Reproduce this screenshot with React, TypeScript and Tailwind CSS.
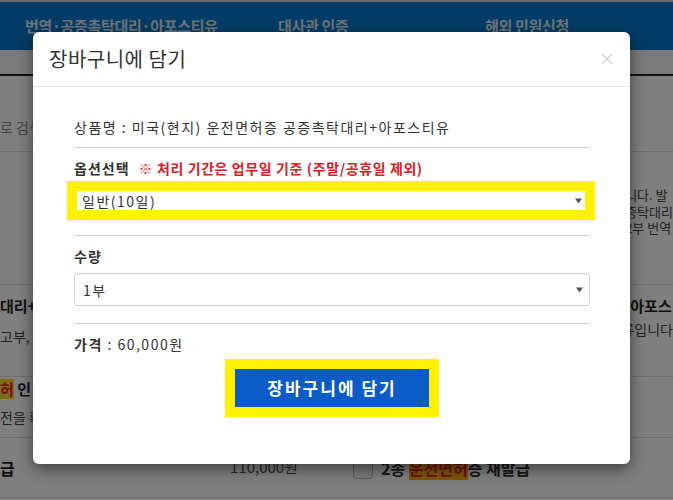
const font =
  "font-['Malgun_Gothic','Noto_Sans_CJK_KR','Liberation_Sans',sans-serif]";

function Caret() {
  return (
    <svg width="7" height="6" viewBox="0 0 7 6" className="shrink-0">
      <path d="M0 0.5H7L3.5 5.5Z" fill="#555" />
    </svg>
  );
}

function BackgroundPage() {
  return (
    <div className="flex flex-col">
      <div className="flex h-[50px] items-center border-t-2 border-[#c9d5df] bg-[#0678cc] text-[15px] font-bold tracking-[-0.3px] text-[#dde8f2]">
        <span className="w-[278px] pl-[25px]">번역·공증촉탁대리·아포스티유</span>
        <span className="w-[207px]">대사관 인증</span>
        <span>해외 민원신청</span>
      </div>
      <div className="h-[26px] border-b-2 border-[#222] bg-[#f6f6f6]" />

      {/* search row */}
      <div className="flex h-[76px] border-b border-[#ddd] pt-[41px] text-[14px] leading-[20px] text-[#888]">
        <span className="w-[33px] overflow-hidden whitespace-nowrap">로 검색</span>
      </div>

      {/* row B */}
      <div className="flex h-[133px] border-b border-[#ddd]">
        <div className="w-[629px]" />
        <div className="flex flex-col whitespace-nowrap pt-[35px] text-[13px] leading-[16px] text-[#444]">
          <span>니다. 발</span>
          <span className="mt-[1px]">증탁대리</span>
          <span>2부 번역</span>
        </div>
      </div>

      {/* row C */}
      <div className="flex h-[92px] border-b border-[#ddd] whitespace-nowrap text-[14px]">
        <div className="flex w-[629px] flex-col pt-[11px] leading-[20px]">
          <span className="w-[33px] overflow-hidden text-[15px] font-bold text-[#222]">대리+</span>
          <span className="mt-[10px] w-[33px] overflow-hidden text-[#444]">고부, 번</span>
        </div>
        <div className="flex flex-col pt-[11px] leading-[20px]">
          <span className="text-[15px] font-bold text-[#222]">+아포스</span>
          <span className="mt-[3px] text-[#444]">류입니다</span>
        </div>
      </div>

      {/* row D */}
      <div className="flex h-[61px] flex-col border-b border-[#ddd] whitespace-nowrap pt-[2px] text-[14px] leading-[20px]">
        <span className="w-[33px] overflow-hidden text-[15px] font-bold text-[#222]">
          <span className="bg-[#ffd42a] text-[#e01e1e]">허</span> 인
        </span>
        <span className="mt-[8px] w-[33px] overflow-hidden text-[#444]">전을 확</span>
      </div>

      {/* row E */}
      <div className="flex h-[60px] items-center border-b border-[#ddd] whitespace-nowrap">
        <span className="w-[230px] text-[16px] font-bold text-[#222]">급</span>
        <span className="w-[123px] text-[15px] text-[#555]">110,000원</span>
        <span className="h-[22px] w-[20px] rounded-[3px] border border-[#bbb] bg-[#f4f4f4]" />
        <span className="ml-[8px] text-[16px] font-bold text-[#333]">
          2종 <span className="bg-[#ffb000] text-[#e01e1e]">운전면허</span>증 재발급
        </span>
      </div>
    </div>
  );
}

function CartModal() {
  return (
    <div className="absolute inset-0 bg-black/50">
      <div className="ml-[33px] mt-[32px] w-[597px] rounded-[6px] bg-white text-[#333] shadow-[0_5px_15px_rgba(0,0,0,0.5)]">
        <div className="flex h-[55px] items-center justify-between border-b border-[#e5e5e5] pl-[16px] pr-[17px]">
          <h4 className="text-[20px] leading-none tracking-[0.5px]">장바구니에 담기</h4>
          <svg width="12" height="12" viewBox="0 0 12 12">
            <path d="M1 1L11 11M11 1L1 11" stroke="#cfcfcf" strokeWidth="1.2" />
          </svg>
        </div>

        <div className="flex flex-col pb-[47px] pl-[41px] pr-[40px] pt-[30px] text-[14px] leading-[20px] tracking-[1.5px]">
          <p>상품명 : 미국(현지) 운전면허증 공증촉탁대리+아포스티유</p>
          <hr className="mt-[10px] border-[#d5d5d5]" />

          <div className="mt-[10px] flex items-center gap-[9px]">
            <span className="font-bold tracking-[1px]">옵션선택</span>
            <span className="font-bold tracking-[0.6px] text-[#d9201f]">
              ※ 처리 기간은 업무일 기준 (주말/공휴일 제외)
            </span>
          </div>
          <div className="-ml-[7px] -mr-[5px] mt-[3px] bg-[#fff200] p-[10px] shadow-[0_2px_3px_rgba(0,0,0,0.08)]">
            <div className="flex h-[19px] items-center justify-between bg-white pl-[5px] pr-[3px]">
              <span>일반(10일)</span>
              <Caret />
            </div>
          </div>
          <hr className="mt-[15px] border-[#d5d5d5]" />

          <span className="mt-[10px] font-bold tracking-[1px]">수량</span>
          <div className="mt-[7px] flex h-[33px] items-center justify-between rounded-[4px] border border-[#ccc] pl-[8px] pr-[6px]">
            <span>1부</span>
            <Caret />
          </div>
          <hr className="mt-[17px] border-[#d5d5d5]" />

          <p className="mt-[10px]">
            <span className="font-bold">가격</span> : 60,000원
          </p>

          <div className="mx-auto mt-[5px] bg-[#fff200] p-[10px]">
            <button className="h-[38px] w-[194px] bg-[#0d5bc6] text-[17px] font-bold tracking-[2px] text-white">
              장바구니에 담기
            </button>
          </div>
        </div>
      </div>
    </div>
  );
}

export default function App() {
  return (
    <div className={`relative h-[500px] overflow-hidden bg-white ${font}`}>
      <BackgroundPage />
      <CartModal />
    </div>
  );
}
